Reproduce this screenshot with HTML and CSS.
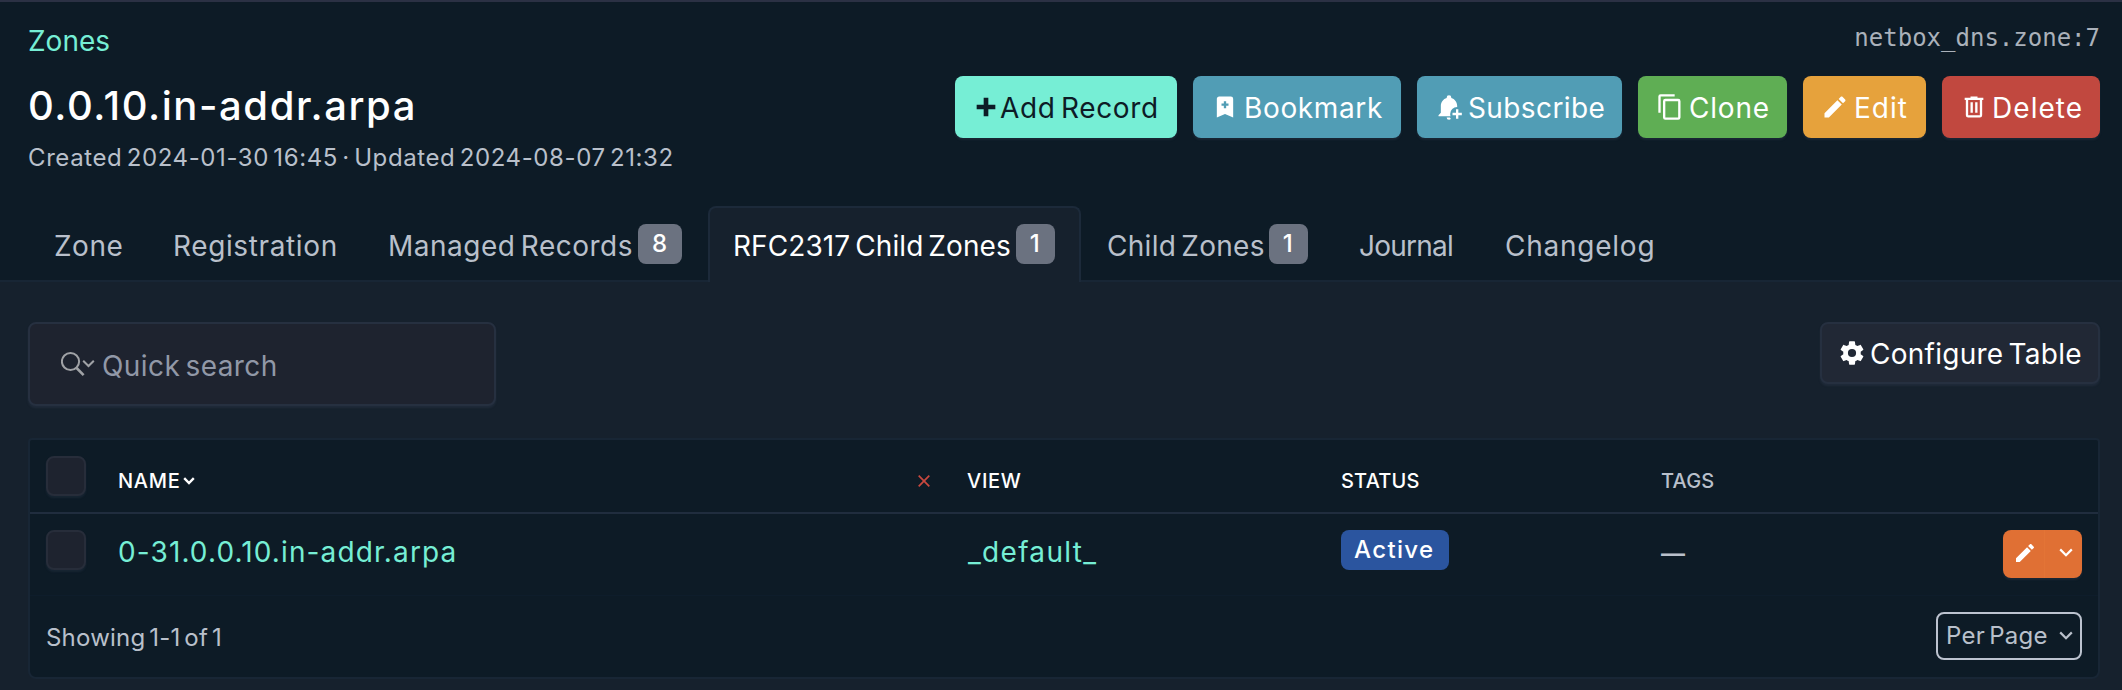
FILE: index.html
```
<!DOCTYPE html>
<html lang="en">
<head>
<meta charset="utf-8">
<title>0.0.10.in-addr.arpa</title>
<link rel="stylesheet" href="styles.css">
</head>
<body>
<header class="page-header">
  <div class="crumbs">
    <a class="crumb">Zones</a>
    <code class="object-id">netbox_dns.zone:7</code>
  </div>
  <div class="title-row">
    <div>
      <h1 class="title">0.0.10.in-addr.arpa</h1>
      <p class="meta">Created 2024-01-30 16:45 · Updated 2024-08-07 21:32</p>
    </div>
    <div class="actions">
      <a class="btn btn-add"><svg class="icon" viewBox="0 0 24 24"><path d="M20 14H14V20H10V14H4V10H10V4H14V10H20V14Z"/></svg><span>Add Record</span></a>
      <a class="btn btn-bookmark"><svg class="icon" viewBox="0 0 24 24"><path d="M17,3A2,2 0 0,1 19,5V21L12,18L5,21V5C5,3.89 5.9,3 7,3H17M11,7V9H9V11H11V13H13V11H15V9H13V7H11Z"/></svg><span>Bookmark</span></a>
      <a class="btn btn-subscribe"><svg class="icon" viewBox="0 0 24 24"><path d="M12 2A2 2 0 0 0 10 4A2 2 0 0 0 10 4.29C7.12 5.14 5 7.82 5 11V17L3 19V20H13.35A6 6 0 0 1 13 18A6 6 0 0 1 19 12V11C19 7.82 16.88 5.14 14 4.29A2 2 0 0 0 14 4A2 2 0 0 0 12 2M18 14V17H15V19H18V22H20V19H23V17H20V14H18M10 21A2 2 0 0 0 12 23A2 2 0 0 0 13.65 22.13A6 6 0 0 1 12.8 21H10Z"/></svg><span>Subscribe</span></a>
      <a class="btn btn-clone"><svg class="icon" viewBox="0 0 24 24"><path d="M19,21H8V7H19M19,5H8A2,2 0 0,0 6,7V21A2,2 0 0,0 8,23H19A2,2 0 0,0 21,21V7A2,2 0 0,0 19,5M16,1H4A2,2 0 0,0 2,3V17H4V3H16V1Z"/></svg><span>Clone</span></a>
      <a class="btn btn-edit"><svg class="icon" viewBox="0 0 24 24"><path d="M20.71,7.04C21.1,6.65 21.1,6 20.71,5.63L18.37,3.29C18,2.9 17.35,2.9 16.96,3.29L15.12,5.12L18.87,8.87M3,17.25V21H6.75L17.81,9.93L14.06,6.18L3,17.25Z"/></svg><span>Edit</span></a>
      <a class="btn btn-delete"><svg class="icon" viewBox="0 0 24 24"><path d="M9,3V4H4V6H5V19A2,2 0 0,0 7,21H17A2,2 0 0,0 19,19V6H20V4H15V3H9M7,6H17V19H7V6M9,8V17H11V8H9M13,8V17H15V8H13Z"/></svg><span>Delete</span></a>
    </div>
  </div>
  <nav class="tabs">
    <a class="tab tab-zone">Zone</a>
    <a class="tab tab-registration">Registration</a>
    <a class="tab tab-managed"><span>Managed Records</span><b class="count count-wide">8</b></a>
    <a class="tab tab-rfc active"><span>RFC2317 Child Zones</span><b class="count">1</b></a>
    <a class="tab tab-child"><span>Child Zones</span><b class="count">1</b></a>
    <a class="tab tab-journal">Journal</a>
    <a class="tab tab-changelog">Changelog</a>
  </nav>
</header>
<main class="content">
  <div class="toolbar">
    <div class="search">
      <svg class="search-icon" viewBox="0 0 34 26" fill="none" stroke="currentColor" stroke-width="2"><circle cx="9.5" cy="10.5" r="8.6"/><path d="M15.6 17L22.6 24.2" stroke-width="2.6"/><path d="M22.2 9.8L27.5 15L32.8 9.8"/></svg>
      <span>Quick search</span>
    </div>
    <a class="btn btn-configure"><svg class="icon" viewBox="0 0 24 24"><path d="M12,15.5A3.5,3.5 0 0,1 8.5,12A3.5,3.5 0 0,1 12,8.5A3.5,3.5 0 0,1 15.5,12A3.5,3.5 0 0,1 12,15.5M19.43,12.97C19.47,12.65 19.5,12.33 19.5,12C19.5,11.67 19.47,11.34 19.43,11L21.54,9.37C21.73,9.22 21.78,8.95 21.66,8.73L19.66,5.27C19.54,5.05 19.27,4.96 19.05,5.05L16.56,6.05C16.04,5.66 15.5,5.32 14.87,5.07L14.5,2.42C14.46,2.18 14.25,2 14,2H10C9.75,2 9.54,2.18 9.5,2.42L9.13,5.07C8.5,5.32 7.96,5.66 7.44,6.05L4.95,5.05C4.73,4.96 4.46,5.05 4.34,5.27L2.34,8.73C2.21,8.95 2.27,9.22 2.46,9.37L4.57,11C4.53,11.34 4.5,11.67 4.5,12C4.5,12.33 4.53,12.65 4.57,12.97L2.46,14.63C2.27,14.78 2.21,15.05 2.34,15.27L4.34,18.73C4.46,18.95 4.73,19.03 4.95,18.95L7.44,17.94C7.96,18.34 8.5,18.68 9.13,18.93L9.5,21.58C9.54,21.82 9.75,22 10,22H14C14.25,22 14.46,21.82 14.5,21.58L14.87,18.93C15.5,18.67 16.04,18.34 16.56,17.94L19.05,18.95C19.27,19.03 19.54,18.95 19.66,18.73L21.66,15.27C21.78,15.05 21.73,14.78 21.54,14.63L19.43,12.97Z"/></svg><span>Configure Table</span></a>
  </div>
  <section class="card">
    <div class="row row-head">
      <div class="cell"><span class="checkbox"></span></div>
      <div class="cell name-head">
        <span class="th">NAME</span>
        <svg class="sort" viewBox="0 0 12 8"><path d="M1.2 1.2L6 6L10.8 1.2"/></svg>
        <svg class="clear" viewBox="0 0 12 12"><path d="M.7 .7L11.3 11.3M11.3 .7L.7 11.3"/></svg>
      </div>
      <div class="cell"><span class="th">VIEW</span></div>
      <div class="cell"><span class="th th-tight">STATUS</span></div>
      <div class="cell"><span class="th th-tight th-muted">TAGS</span></div>
    </div>
    <div class="row">
      <div class="cell"><span class="checkbox"></span></div>
      <div class="cell"><a class="link">0-31.0.0.10.in-addr.arpa</a></div>
      <div class="cell"><a class="link link-view">_default_</a></div>
      <div class="cell"><span class="status">Active</span></div>
      <div class="cell"><span class="dash">—</span></div>
      <div class="cell cell-end">
        <div class="split">
          <span class="split-main"><svg class="icon-sm" viewBox="0 0 24 24"><path d="M20.71,7.04C21.1,6.65 21.1,6 20.71,5.63L18.37,3.29C18,2.9 17.35,2.9 16.96,3.29L15.12,5.12L18.87,8.87M3,17.25V21H6.75L17.81,9.93L14.06,6.18L3,17.25Z"/></svg></span>
          <span class="split-toggle"><svg class="caret" viewBox="0 0 14 9"><path d="M1.2 1.4L7 7.2L12.8 1.4"/></svg></span>
        </div>
      </div>
    </div>
    <footer class="card-footer">
      <span class="showing">Showing 1-1 of 1</span>
      <span class="per-page"><span>Per Page</span><svg class="caret" viewBox="0 0 14 9"><path d="M1.2 1.4L7 7.2L12.8 1.4"/></svg></span>
    </footer>
  </section>
</main>
</body>
</html>
```
FILE: styles.css
```
* { box-sizing: border-box; }
body {
  margin: 0;
  height: 690px;
  overflow: hidden;
  background: #16212d;
  color: #b9c0cb;
  font: 400 28px/40px Inter, "Liberation Sans", sans-serif;
  word-spacing: -3px;
}
svg { display: block; flex: none; }

.page-header {
  height: 282px;
  padding: 19px 22px 0 28px;
  border-top: 2px solid #2b3144;
  background: #0d1b26;
}
.crumbs { display: flex; justify-content: space-between; height: 55px; }
.crumb { color: #76eed5; }
.object-id {
  font: 24px/34px "DejaVu Sans Mono", "Liberation Mono", monospace;
  color: #aab1ba;
}
.title-row { display: flex; justify-content: space-between; height: 130px; }
.title {
  margin: 0;
  padding: 6px 0 0;
  font: 500 40px/48px Inter, sans-serif;
  letter-spacing: 1.58px;
  color: #fff;
}
.meta {
  margin: 12px 0 0;
  font-size: 24px;
  line-height: 32px;
  letter-spacing: .6px;
}
.actions { display: flex; gap: 16px; }
.btn {
  display: flex;
  align-items: center;
  gap: 5px;
  height: 62px;
  padding-left: 18px;
  border-radius: 8px;
  color: #fff;
  white-space: nowrap;
  box-shadow: 0 2px 2px rgba(48, 60, 80, .35);
}
.btn span { padding-top: 2px; }
.icon { width: 28px; height: 28px; fill: currentColor; }
.btn-add { width: 222px; gap: 0; padding-left: 17px; background: #76eed5; color: #0d1b26; letter-spacing: .63px; }
.btn-bookmark { width: 208px; background: #519db5; letter-spacing: .64px; }
.btn-subscribe { width: 205px; background: #519db5; letter-spacing: .4px; }
.btn-clone { width: 149px; background: #5fae54; letter-spacing: .8px; }
.btn-edit { width: 123px; background: #e6a23c; letter-spacing: 1px; }
.btn-delete { width: 158px; gap: 4px; background: #c1483f; letter-spacing: 1.05px; }

.tabs { display: flex; height: 76px; margin: 0 -22px 0 -28px; padding-left: 28px; border-bottom: 2px solid #182635; }
.tab {
  display: flex;
  gap: 5px;
  height: 76px;
  padding: 18px 0 0 24px;
  border: 2px solid transparent;
  border-bottom: 0;
  white-space: nowrap;
}
.tab-zone { width: 119px; letter-spacing: .5px; }
.tab-registration { width: 216px; letter-spacing: .62px; }
.tab-managed { width: 345px; letter-spacing: .5px; padding-left: 23px; }
.tab-rfc { width: 373px; letter-spacing: .09px; padding-left: 23px; }
.tab-child { width: 252px; letter-spacing: .28px; }
.tab-journal { width: 146px; letter-spacing: -.76px; }
.tab-changelog { width: 180px; letter-spacing: .76px; }
.tab.active {
  background: #16212d;
  border-color: #1c2a3a;
  border-radius: 8px 8px 0 0;
  color: #fff;
}
.count {
  width: 39px;
  height: 40px;
  margin-top: -2px;
  padding-right: 1px;
  border-radius: 8px;
  background: #6b7280;
  color: #fff;
  font-size: 24px;
  font-weight: 500;
  line-height: 39px;
  text-align: center;
  letter-spacing: 0;
}
.tab-child .count { margin-left: -1px; }
.count-wide { width: 44px; }

.content { padding: 40px 22px 0 28px; }
.toolbar { display: flex; justify-content: space-between; align-items: flex-start; height: 116px; }
.search {
  display: flex;
  align-items: center;
  gap: 7px;
  width: 468px;
  height: 84px;
  padding: 4px 0 0 31px;
  border: 2px solid #263040;
  border-radius: 8px;
  background: #1e232f;
  color: #9198a7;
  letter-spacing: .42px;
  box-shadow: 0 2px 2px rgba(48, 60, 80, .35);
}
.search-icon { width: 34px; height: 26px; margin-top: -5px; color: #a0a2a6; }
.btn-configure {
  width: 280px;
  gap: 4px;
  padding-left: 16px;
  background: #212835;
  border: 2px solid #263040;
  letter-spacing: .26px;
}

.card {
  height: 241px;
  border: 2px solid #182635;
  border-radius: 4px 4px 8px 8px;
  background: #0d1b26;
}
.row {
  display: grid;
  grid-template-columns: 72px 849px 374px 320px 453px;
  height: 82px;
  border-bottom: 1px solid #0e1d2b;
}
.row:not(.row-head) { grid-template-columns: 72px 849px 374px 320px 300px 153px; }
.row-head { height: 74px; border-bottom: 2px solid #202d3e; }
.cell { padding: 16px 16px 0; }
.cell-end { display: flex; justify-content: flex-end; }
.checkbox {
  display: block;
  width: 40px;
  height: 40px;
  border: 2px solid #272d3a;
  border-radius: 8px;
  background: #1e232f;
  box-shadow: 0 2px 2px rgba(48, 60, 80, .3);
}
.th {
  display: block;
  padding-top: 5px;
  font-size: 20px;
  font-weight: 500;
  letter-spacing: .7px;
  color: #fff;
}
.th-tight { letter-spacing: .2px; }
.th-muted { color: #b9c0cb; }
.name-head { display: flex; }
.sort { width: 12px; height: 8px; margin: 21px 0 0 3px; fill: none; stroke: #fff; stroke-width: 2.4; }
.clear { width: 12px; height: 12px; margin: 19px 5px 0 auto; fill: none; stroke: #c8483f; stroke-width: 1.7; }
.link { display: block; padding-top: 2px; color: #76eed5; letter-spacing: 1.12px; }
.link-view { padding-left: 1px; letter-spacing: 1.3px; }
.status {
  display: block;
  width: 108px;
  height: 40px;
  padding-left: 13px;
  border-radius: 8px;
  background: #2b559f;
  color: #fff;
  font-size: 24px;
  font-weight: 500;
  line-height: 39px;
  letter-spacing: 1.35px;
}
.dash { display: block; padding-top: 4px; font-size: 24px; font-weight: 600; }
.split {
  display: flex;
  width: 79px;
  height: 48px;
  border-radius: 8px;
  background: #e07034;
  color: #fff;
  box-shadow: 0 2px 2px rgba(48, 60, 80, .35);
}
.split-main { width: 42px; padding: 11px 0 0 10px; border-right: 1px solid #e37436; }
.split-toggle { padding: 18px 0 0 14px; }
.icon-sm { width: 24px; height: 24px; fill: currentColor; }
.caret { width: 14px; height: 9px; fill: none; stroke: currentColor; stroke-width: 2.2; }
.card-footer {
  display: flex;
  justify-content: space-between;
  padding: 16px 16px 0;
  font-size: 24px;
}
.showing { padding-top: 6px; letter-spacing: .2px; }
.per-page {
  display: flex;
  justify-content: space-between;
  width: 146px;
  height: 48px;
  padding: 2px 7px 0 8px;
  border: 2px solid #bcc3cf;
  border-radius: 8px;
  letter-spacing: .3px;
}
.per-page .caret { margin-top: 15px; }
```
